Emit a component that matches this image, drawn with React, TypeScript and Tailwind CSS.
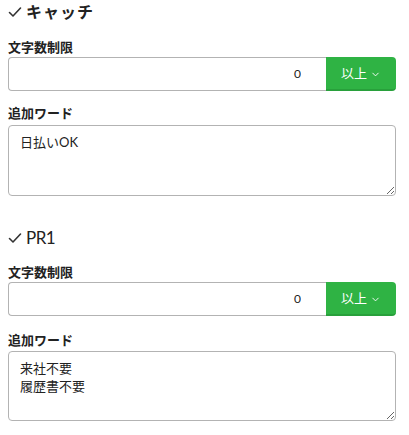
import { ChevronDown } from "lucide-react";

const font = { fontFamily: '"Lato", "Noto Sans CJK JP", sans-serif' };

function CheckMark() {
    return (
        <svg width="14" height="12" viewBox="0 0 14 12" className="shrink-0">
            <path d="M1.5 6.5 L5 10 L12.5 2" fill="none" stroke="#333" strokeWidth="1.6" strokeLinecap="round" strokeLinejoin="round" />
        </svg>
    );
}

function LimitRow() {
    return (
        <div className="flex h-[34px]">
            <input
                readOnly
                defaultValue="0"
                className="flex-1 min-w-0 border border-[#b3b3b3] border-r-0 rounded-l-[4px] text-right pr-[25px] text-[12px] text-[#222] outline-none"
                style={font}
            />
            <button className="w-[70px] shrink-0 bg-[#2fb344] rounded-r-[4px] border-b-2 border-[#28a03b] text-white text-[13px] flex items-center justify-center gap-[3px] pt-[2px]">
                以上
                <ChevronDown size={11} strokeWidth={2} />
            </button>
        </div>
    );
}

export default function App() {
    return (
        <div className="w-[409px] h-[435px] bg-white text-[#222] pl-[8px] pr-[13px] pt-[2px]" style={font}>
            {/* キャッチ */}
            <div className="h-[20px] flex items-center gap-[4px]">
                <CheckMark />
                <span className="text-[16px] font-bold tracking-[1px]">キャッチ</span>
            </div>
            <div className="mt-[17px] h-[16px] text-[13px] font-bold leading-[16px]">文字数制限</div>
            <div className="mt-[2px]"><LimitRow /></div>
            <div className="mt-[14px] h-[16px] text-[13px] font-bold leading-[16px]">追加ワード</div>
            <textarea
                readOnly
                defaultValue="日払いOK"
                className="mt-[4px] block w-full h-[71px] border border-[#b3b3b3] rounded-[4px] px-[11px] py-[7px] text-[13px] leading-[18px] text-[#222] outline-none"
                style={font}
            />

            {/* PR1 */}
            <div className="mt-[32px] h-[20px] flex items-center gap-[4px]">
                <CheckMark />
                <span className="text-[17px] tracking-[-0.5px]">PR1</span>
            </div>
            <div className="mt-[16px] h-[16px] text-[13px] font-bold leading-[16px]">文字数制限</div>
            <div className="mt-[2px]"><LimitRow /></div>
            <div className="mt-[16px] h-[16px] text-[13px] font-bold leading-[16px]">追加ワード</div>
            <textarea
                readOnly
                defaultValue={"来社不要\n履歴書不要"}
                className="mt-[3px] block w-full h-[70px] border border-[#b3b3b3] rounded-[4px] px-[11px] py-[7px] text-[13px] leading-[18px] text-[#222] outline-none"
                style={font}
            />
        </div>
    );
}
